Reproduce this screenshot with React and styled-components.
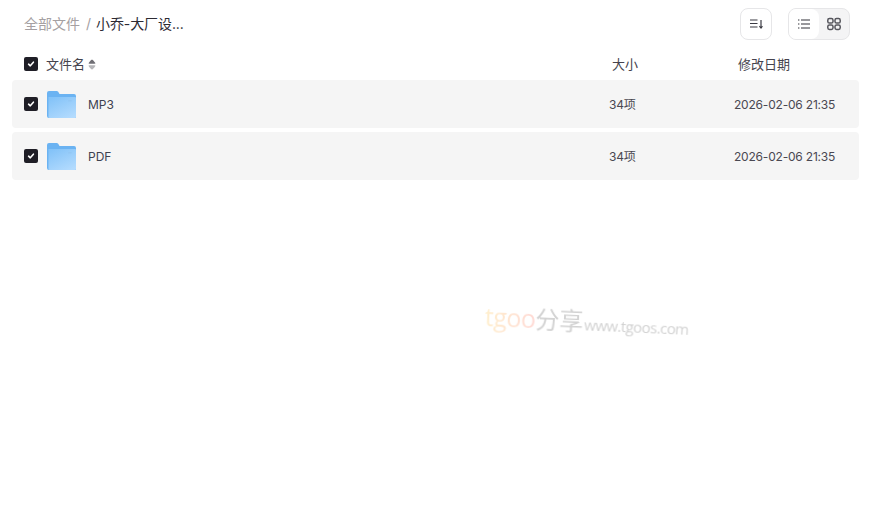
import React from "react";
import styled, { createGlobalStyle } from "styled-components";

const Global = createGlobalStyle`
  html, body { margin: 0; padding: 0; background: #fff; }
  body { font-family: Inter, "Noto Sans CJK SC", sans-serif; }
`;
const Page = styled.div`
  position: relative; width: 874px; height: 514px; overflow: hidden; background: #fff;
  padding: 8px 15px 0 12px; box-sizing: border-box;
`;
const TopBar = styled.div`
  display: flex; align-items: center; justify-content: space-between;
  height: 32px; padding: 0 9px 0 12px;
`;
const Crumbs = styled.div`
  display: flex; align-items: center; font-size: 14px; line-height: 32px;
`;
const CrumbLink = styled.span`color: #a5a0a2;`;
const CrumbSep = styled.span`color: #a5a0a2; margin: 0 5px 0 6px;`;
const CrumbCurrent = styled.span`color: #2c2a33; letter-spacing: -0.1px;`;
const Tools = styled.div`display: flex; gap: 16px;`;
const IconBtn = styled.div`
  width: 32px; height: 32px; box-sizing: border-box; border: 1px solid #e6e6e8; border-radius: 8px;
  display: flex; align-items: center; justify-content: center; background: #fff;
`;
const Segment = styled.div`
  display: flex; width: 62px; height: 32px; box-sizing: border-box; border: 1px solid #e6e6e8;
  border-radius: 8px; overflow: hidden; background: #f4f4f5;
`;
const SegItem = styled.div`
  flex: 1; display: flex; align-items: center; justify-content: center;
  background: ${p => (p.$active ? "#fff" : "transparent")};
  border-radius: ${p => (p.$active ? "0 8px 8px 0" : "0")};
`;
const Grid = `
  display: grid; grid-template-columns: 585px 125px 1fr; align-items: center;
`;
const HeadRow = styled.div`
  ${Grid} height: 40px; box-sizing: border-box; padding: 8px 0 0 12px; font-size: 13px; color: #45434d;
`;
const NameHead = styled.div`display: flex; align-items: center;`;
const HeadLabel = styled.span`margin: 0 0 2px 8px;`;
const SortIcon = styled.svg`margin-left: 3px; display: block;`;
const SizeHead = styled.div`padding-left: 3px; margin-bottom: 2px;`;
const DateHead = styled.div`padding-left: 4px; margin-bottom: 2px;`;
const List = styled.div`display: flex; flex-direction: column; gap: 4px;`;
const Row = styled.div`
  ${Grid} height: 48px; background: #f5f5f5; border-radius: 4px; padding-left: 12px;
  font-size: 12px; line-height: 16px; color: #4a4852; box-sizing: border-box;
`;
const NameCell = styled.div`display: flex; align-items: center;`;
const Name = styled.span`margin: 2px 0 0 12px; color: #3d4150;`;
const RowValue = styled.div`letter-spacing: -0.2px; margin-top: 2px;`;
const Check = styled.div`
  width: 14px; height: 14px; border-radius: 2px; background: #1f1e26;
  display: flex; align-items: center; justify-content: center; flex: none;
`;
const Folder = styled.svg`margin-left: 9px; display: block; flex: none;`;
const Watermark = styled.div`
  position: absolute; left: 485px; top: 298px; display: flex; align-items: baseline; white-space: nowrap;
  transform: rotate(2.5deg); transform-origin: left center; pointer-events: none;
  font-family: "Noto Sans CJK SC", sans-serif; filter: blur(0.3px);
`;
const WmLogo = styled.span`
  font-size: 25px; font-family: "Open Sans", sans-serif; font-weight: 400; letter-spacing: -0.5px;
  background: linear-gradient(90deg, #ffefcc, #ffe2d2 60%, #ffd9d5);
  -webkit-background-clip: text; background-clip: text; color: transparent;
`;
const WmCn = styled.span`font-size: 24px; color: #d2d2d2;`;
const WmUrl = styled.span`font-size: 15px; color: #d2d2d2; margin-left: 1px; font-family: "Open Sans", sans-serif; letter-spacing: -0.55px;`;

const CheckBox = () => (
  <Check>
    <svg width="10" height="10" viewBox="0 0 10 10" fill="none">
      <path d="M2.6 5.2 L4.3 6.8 L7.4 3.2" stroke="#fff" strokeWidth="1.6" strokeLinecap="round" strokeLinejoin="round" />
    </svg>
  </Check>
);

const FolderIcon = ({ id }) => (
  <Folder width="29" height="27" viewBox="0 0 30 27" preserveAspectRatio="none">
    <defs>
      <linearGradient id={id} x1="0.2" y1="0" x2="0.8" y2="1">
        <stop offset="0" stopColor="#84c3f8" />
        <stop offset="1" stopColor="#b3dbfe" />
      </linearGradient>
    </defs>
    <path d="M0 2 a2 2 0 0 1 2-2 h8 a2 2 0 0 1 1.6.8 L13 3 h15 a2 2 0 0 1 2 2 v3 H0 Z" fill="#6bb3f2" />
    <path d="M0 5 h28 a2 2 0 0 1 2 2 v19 a1 1 0 0 1-1 1 H2 a2 2 0 0 1-2-2 Z" fill="#6bb3f2" />
    <path d="M1.5 6 h27.5 a1 1 0 0 1 1 1 v19 a1 1 0 0 1-1 1 H2.5 a1 1 0 0 1-1-1 Z" fill={`url(#${id})`} />
    <rect x="22" y="9" width="3.5" height="1.5" fill="#93c7f4" />
  </Folder>
);

const rows = ["MP3", "PDF"];

export default function App() {
  return (
    <Page>
      <Global />
      <TopBar>
        <Crumbs>
          <CrumbLink>全部文件</CrumbLink>
          <CrumbSep>/</CrumbSep>
          <CrumbCurrent>小乔-大厂设...</CrumbCurrent>
        </Crumbs>
        <Tools>
          <IconBtn>
            <svg width="16" height="16" viewBox="0 0 16 16" fill="none" stroke="#3a3a42" strokeWidth="1.2">
              <path d="M2 4h7.5M2 7.5h7.5M2 11h7.5" />
              <path d="M13 4v7.5" />
              <path d="M11.4 10.2l1.6 1.8 1.4-1.8" />
            </svg>
          </IconBtn>
          <Segment>
            <SegItem $active>
              <svg width="14" height="14" viewBox="0 0 14 14" fill="none" stroke="#33333b" strokeWidth="1.2">
                <path d="M4 3h9M4 7h9M4 11h9" />
                <path d="M1 3h1.4M1 7h1.4M1 11h1.4" />
              </svg>
            </SegItem>
            <SegItem>
              <svg width="14" height="14" viewBox="0 0 14 14" fill="none" stroke="#55555c" strokeWidth="1.5">
                <rect x=".8" y="1.6" width="5.2" height="4.4" rx="1.6" />
                <rect x="8" y="1.6" width="5.2" height="4.4" rx="1.6" />
                <rect x=".8" y="8" width="5.2" height="4.4" rx="1.6" />
                <rect x="8" y="8" width="5.2" height="4.4" rx="1.6" />
              </svg>
            </SegItem>
          </Segment>
        </Tools>
      </TopBar>
      <HeadRow>
        <NameHead>
          <CheckBox />
          <HeadLabel>文件名</HeadLabel>
          <SortIcon width="8" height="11" viewBox="0 0 8 12">
            <path d="M4 .5 C4.6 .5 7.8 4 7.8 5 C7.8 5.4 .2 5.4 .2 5 C.2 4 3.4 .5 4 .5 Z" fill="#6f6e74" />
            <path d="M4 11.5 C4.6 11.5 7.8 8 7.8 7 C7.8 6.6 .2 6.6 .2 7 C.2 8 3.4 11.5 4 11.5 Z" fill="#b5b5b8" />
          </SortIcon>
        </NameHead>
        <SizeHead>大小</SizeHead>
        <DateHead>修改日期</DateHead>
      </HeadRow>
      <List>
        {rows.map(name => (
          <Row key={name}>
            <NameCell>
              <CheckBox />
              <FolderIcon id={`folder-${name}`} />
              <Name>{name}</Name>
            </NameCell>
            <RowValue>34项</RowValue>
            <RowValue>2026-02-06 21:35</RowValue>
          </Row>
        ))}
      </List>
      <Watermark>
        <WmLogo>tgoo</WmLogo>
        <WmCn>分享</WmCn>
        <WmUrl>www.tgoos.com</WmUrl>
      </Watermark>
    </Page>
  );
}
